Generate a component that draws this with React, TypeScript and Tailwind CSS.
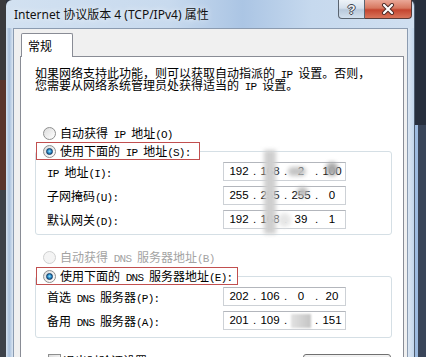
import React from "react";

function T({ s }: { s: string }) {
  const parts = s.split(/([\x20-\x7E]+)/).filter((p) => p.length > 0);
  return (
    <>
      {parts.map((p, i) =>
        /^[\x20-\x7E]+$/.test(p) ? (
          <span key={i} className="whitespace-pre font-['Liberation_Mono',monospace] text-[11px] leading-[6px] tracking-[-0.8px]">
            {p}
          </span>
        ) : (
          <span key={i}>{p}</span>
        )
      )}
    </>
  );
}

function Radio({ checked, disabled }: { checked?: boolean; disabled?: boolean }) {
  return (
    <span
      className={
        disabled
          ? "flex h-[13px] w-[13px] shrink-0 items-center justify-center rounded-full border border-[#cfd0d0] bg-[#f4f4f4]"
          : "flex h-[13px] w-[13px] shrink-0 items-center justify-center rounded-full border border-[#8e8f8f] bg-[linear-gradient(135deg,#dcdcdc,#ffffff)]"
      }
    >
      {checked ? (
        <span className="h-[7px] w-[7px] rounded-full border border-[#0f3a66] bg-[radial-gradient(circle_at_50%_45%,#9be6ff_0%,#2f93cf_45%,#134a7e_100%)]" />
      ) : null}
    </span>
  );
}

function IPBox({ parts }: { parts: string[] }) {
  return (
    <div className="flex h-[19px] w-[123px] items-center border border-[#cdd1d6] border-t-[#b3b6bc] bg-white pl-[3px] font-['Liberation_Sans',sans-serif] text-[11.5px] leading-[17px] text-black">
      {parts.map((p, i) => (
        <React.Fragment key={i}>
          <span className="w-[24px] text-center">{p}</span>
          {i < 3 ? <span className="w-[7px] text-center">.</span> : null}
        </React.Fragment>
      ))}
    </div>
  );
}

function Row({ label, parts }: { label: string; parts: string[] }) {
  return (
    <div className="flex h-[19px] items-center">
      <div className="h-[12px] w-[176px] leading-[12px]">
        <T s={label} />
      </div>
      <IPBox parts={parts} />
    </div>
  );
}

export default function App() {
  return (
    <div className="relative flex h-[357px] w-[426px] overflow-hidden bg-[#2d3340] font-['Noto_Sans_CJK_SC',sans-serif] text-[12px] leading-[12px] text-black">
      {/* desktop strip left */}
      <div className="flex w-[6px] flex-col">
        <div className="h-[80px] bg-[#3a3a3d]" />
        <div className="h-[110px] bg-[#5a342a]" />
        <div className="flex-1 bg-[#3c4149]" />
      </div>

      {/* window */}
      <div className="flex w-[409px] flex-col rounded-t-[6px] border-r border-[#4e5c6e] bg-[linear-gradient(90deg,#d2e1f1_0%,#c8daee_40%,#abc5e4_58%,#c6d9ee_75%,#d0dff0_100%)]">
        {/* title bar */}
        <div className="flex h-[28px] shrink-0">
          <div className="pl-[8px] pt-[6px] font-['Noto_Sans','Noto_Sans_CJK_SC',sans-serif] text-[12px] leading-[18px] text-[#111] [text-shadow:0_0_6px_rgba(255,255,255,0.95)]">
            Internet 协议版本 4 (TCP/IPv4) 属性
          </div>
          <div className="ml-auto mr-[2px] flex h-[19px]">
            <div className="flex w-[27px] items-center justify-center rounded-bl-[4px] border border-t-0 border-[#5a6470] bg-[linear-gradient(180deg,#eef3f8_0%,#d5e0ec_45%,#b9c9db_55%,#d3e0ee_100%)]">
              <span className="font-['Liberation_Sans',sans-serif] text-[13px] font-bold leading-none text-[#f2f2f2] [text-shadow:1px_0_0_#3c4450,-1px_0_0_#3c4450,0_1px_0_#3c4450,0_-1px_0_#3c4450]">
                ?
              </span>
            </div>
            <div className="flex w-[47px] items-center justify-center rounded-br-[4px] border border-l-0 border-t-0 border-[#5a3a36] bg-[linear-gradient(180deg,#eaa898_0%,#d7775f_45%,#c4452f_55%,#d8745a_100%)]">
              <svg width="14" height="12" viewBox="0 0 14 12">
                <path d="M3 2 L11 10 M11 2 L3 10" stroke="#4a2a26" strokeWidth="4" strokeLinecap="round" />
                <path d="M3 2 L11 10 M11 2 L3 10" stroke="#ffffff" strokeWidth="2.2" strokeLinecap="round" />
              </svg>
            </div>
          </div>
        </div>

        {/* body */}
        <div className="flex flex-1">
          <div className="w-[7px] bg-[linear-gradient(90deg,#d6e3f1,#a7bfdc_45%,#dbe6f2)]" />
          <div className="flex w-[396px] flex-col border-l border-r border-t border-[#8b9bb0] bg-[#f0f0f0] pt-[4px]">
            {/* tab */}
            <div className="relative z-10 -mb-px ml-[7px] flex h-[24px] w-[52px] items-center rounded-t-[2px] border border-b-0 border-[#898c95] bg-white pl-[6px]">
              常规
            </div>
            {/* tab page */}
            <div className="ml-[6px] h-[320px] w-[384px] border border-[#898c95] bg-white pl-[14px]">
              <div className="mt-[10px] whitespace-nowrap">
                <div className="h-[12px]">
                  <T s="如果网络支持此功能，则可以获取自动指派的 IP 设置。否则，" />
                </div>
                <div className="h-[12px]">
                  <T s="您需要从网络系统管理员处获得适当的 IP 设置。" />
                </div>
              </div>

              <div className="mt-[35px] flex h-[14px] items-center pl-[8px]">
                <Radio />
                <span className="ml-[4px] h-[12px]">
                  <T s="自动获得 IP 地址(O)" />
                </span>
              </div>

              <fieldset className="mt-[2px] w-[357px] rounded-[3px] border border-[#d5dfe5]">
                <legend className="ml-0">
                  <div className="flex h-[18px] w-[164px] items-center border border-[#c14f4f] pl-[6px]">
                    <Radio checked />
                    <span className="ml-[4px] h-[12px] whitespace-nowrap">
                      <T s="使用下面的 IP 地址(S):" />
                    </span>
                  </div>
                </legend>
                <div className="flex flex-col gap-[5px] pb-[5px] pl-[11px] pt-[2px]">
                  <Row label="IP 地址(I):" parts={["192", "168", "2", "100"]} />
                  <Row label="子网掩码(U):" parts={["255", "255", "255", "0"]} />
                  <Row label="默认网关(D):" parts={["192", "168", "39", "1"]} />
                </div>
              </fieldset>

              <div className="mt-[15px] flex h-[14px] items-center pl-[8px] text-[#a3a3a3]">
                <Radio disabled />
                <span className="ml-[4px] h-[12px]">
                  <T s="自动获得 DNS 服务器地址(B)" />
                </span>
              </div>

              <fieldset className="mt-[3px] w-[357px] rounded-[3px] border border-[#d5dfe5]">
                <legend className="ml-0">
                  <div className="flex h-[18px] w-[202px] items-center border border-[#c14f4f] pl-[6px]">
                    <Radio checked />
                    <span className="ml-[4px] h-[12px] whitespace-nowrap">
                      <T s="使用下面的 DNS 服务器地址(E):" />
                    </span>
                  </div>
                </legend>
                <div className="flex flex-col gap-[5px] pb-[7px] pl-[11px] pt-[2px]">
                  <Row label="首选 DNS 服务器(P):" parts={["202", "106", "0", "20"]} />
                  <Row label="备用 DNS 服务器(A):" parts={["201", "109", "", "151"]} />
                </div>
              </fieldset>

              <div className="mt-[16px] flex w-[357px] items-start">
                <span className="ml-[13px] h-[13px] w-[13px] border border-[#8e8f8f] bg-[linear-gradient(135deg,#dcdcdc,#ffffff)]" />
                <span className="ml-[2px] mt-[1px] h-[12px]">
                  <T s="退出时验证设置(L)" />
                </span>
                <div className="ml-auto mr-[1px] flex h-[23px] w-[88px] items-center justify-center rounded-[3px] border border-[#707070] bg-[linear-gradient(180deg,#f2f2f2,#dddddd)]">
                  <span className="h-[12px]">
                    <T s="高级(V)..." />
                  </span>
                </div>
              </div>
            </div>
          </div>
          <div className="w-[6px] bg-[linear-gradient(90deg,#dbe6f2,#c2d6ec)]" />
        </div>
      </div>

      {/* desktop strip right */}
      <div className="flex w-[11px] flex-col">
        <div className="h-[125px] bg-[#272f3d]" />
        <div className="flex flex-1">
          <div className="w-[3px] bg-[#9dbbe0]" />
          <div className="flex-1 bg-[#394559]" />
        </div>
      </div>

      {/* mosaic smudges over the addresses */}
      <div className="pointer-events-none absolute left-[264px] top-[150px] h-[84px] w-[12px] bg-[#cfcfcf] blur-[2px]" />
      <div className="pointer-events-none absolute left-[288px] top-[167px] h-[9px] w-[18px] rounded-full bg-[#c4c4c4] blur-[2px]" />
      <div className="pointer-events-none absolute left-[326px] top-[162px] h-[14px] w-[12px] rounded-full bg-[#a9a9a9] blur-[2px]" />
      <div className="pointer-events-none absolute left-[297px] top-[187px] h-[10px] w-[11px] rounded-full bg-[#bdbdbd] blur-[2px]" />
      <div className="pointer-events-none absolute left-[278px] top-[213px] h-[14px] w-[13px] rounded-full bg-[#e6e6e6] blur-[2px]" />
      <div className="pointer-events-none absolute left-[291px] top-[314px] h-[14px] w-[20px] bg-[linear-gradient(90deg,#e2e2e2,#c4c4c4)] blur-[1px]" />
    </div>
  );
}
